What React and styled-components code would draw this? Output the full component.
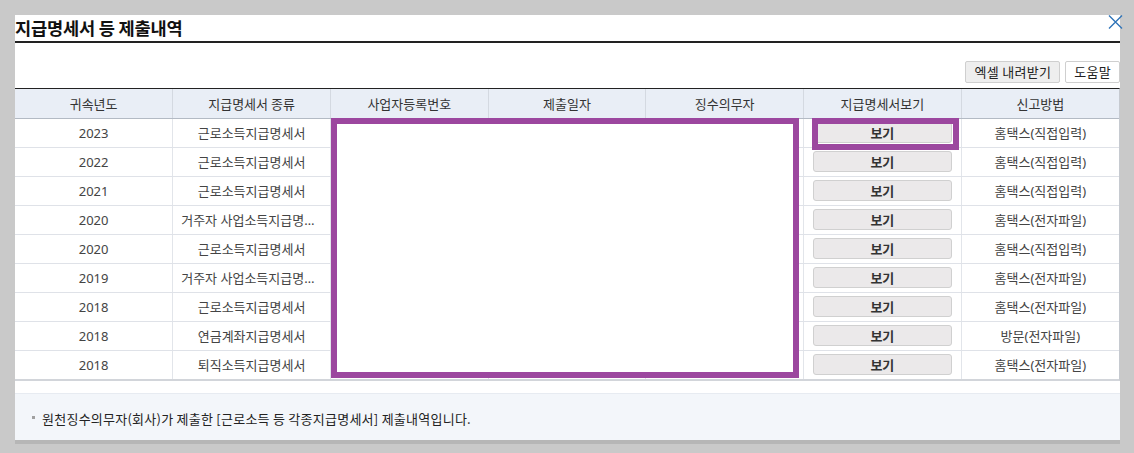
import React from "react";
import styled, { createGlobalStyle } from "styled-components";

const GlobalStyle = createGlobalStyle`
  html, body { margin: 0; padding: 0; background: #c9c9c9; }
  body { font-family: "Noto Sans CJK KR", "Noto Sans", sans-serif; color: #333; }
  * { box-sizing: border-box; }
`;

const Page = styled.div`
  padding: 15px 0 0 15px;
  height: 453px;
`;

const Modal = styled.div`
  position: relative;
  width: 1105px;
  background: #fff;
  box-shadow: 0 4px 0 #b6b6b6;
`;

const Header = styled.div`
  height: 28px;
  display: flex;
  align-items: center;
  border-bottom: 2px solid #222;
`;

const Title = styled.h1`
  margin: 0;
  font-size: 17.6px;
  font-weight: 700;
  color: #111;
  letter-spacing: -0.2px;
  line-height: 1;
`;

const CloseButton = styled.button`
  position: absolute;
  top: -1px;
  right: -3px;
  width: 16px;
  height: 16px;
  padding: 0;
  border: 0;
  background: transparent;
  display: flex;
  align-items: center;
  justify-content: center;
`;

const Toolbar = styled.div`
  display: flex;
  justify-content: flex-end;
  gap: 5px;
  padding: 18px 0 5px;
`;

const ToolButton = styled.button`
  height: 22px;
  padding: 0 8px;
  font-family: inherit;
  font-size: 13px;
  letter-spacing: 0.3px;
  color: #222;
  border: 1px solid #cfcfcf;
  border-radius: 2px;
  background: ${(p) => (p.$primary ? "#eeeeee" : "#ffffff")};
  line-height: 20px;
`;

const TableWrap = styled.div`
  position: relative;
  border-top: 1px solid #222;
  border-bottom: 2px solid #d2d5da;
  border-right: 1px solid #c6cad0;
`;

const Table = styled.table`
  width: 100%;
  border-collapse: collapse;
  table-layout: fixed;
`;

const Th = styled.th`
  height: 29px;
  padding: 0 8px;
  background: #e9eef6;
  font-weight: 400;
  font-size: 13px;
  color: #333;
  border-bottom: 1px solid #b3bac4;
  border-left: 1px solid #d4d9e1;
  &:first-child { border-left: 0; }
`;

const Td = styled.td`
  height: 29px;
  padding: 0 8px;
  font-family: "Noto Sans", "Noto Sans CJK KR", sans-serif;
  font-size: 13px;
  color: #444;
  text-align: center;
  white-space: nowrap;
  overflow: hidden;
  text-overflow: ellipsis;
  border-bottom: 1px solid #dfe2e8;
  border-left: 1px solid #e2e5ea;
  &:first-child { border-left: 0; }
  tr:last-child > & { border-bottom: 0; }
`;

const ViewButton = styled.button`
  display: block;
  margin: 0 auto;
  width: 139px;
  height: 21px;
  padding: 0;
  font-family: "Noto Sans CJK KR", sans-serif;
  font-size: 13px;
  font-weight: 700;
  color: #333;
  background: #ebe9ea;
  border: 1px solid #d0d0d0;
  border-radius: 3px;
`;

const Redaction = styled.div`
  position: absolute;
  left: ${(p) => p.$left}px;
  top: ${(p) => p.$top}px;
  width: ${(p) => p.$width}px;
  height: ${(p) => p.$height}px;
  border: 6px solid #9c479f;
  background: ${(p) => (p.$filled ? "#fff" : "transparent")};
  pointer-events: none;
`;

const Spacer = styled.div`
  height: 12px;
`;

const Footer = styled.div`
  height: 47px;
  display: flex;
  align-items: center;
  padding: 3px 0 0 17px;
  background: #f3f6fa;
  border-top: 1px solid #e7ebf1;
  font-size: 13px;
  letter-spacing: 0.25px;
  color: #222;
`;

const Bullet = styled.span`
  display: inline-block;
  width: 3px;
  height: 3px;
  margin-right: 7px;
  margin-top: -3px;
  background: #a0a0a0;
`;

const columns = [
  "귀속년도",
  "지급명세서 종류",
  "사업자등록번호",
  "제출일자",
  "징수의무자",
  "지급명세서보기",
  "신고방법",
];

const rows = [
  ["2023", "근로소득지급명세서", "홈택스(직접입력)"],
  ["2022", "근로소득지급명세서", "홈택스(직접입력)"],
  ["2021", "근로소득지급명세서", "홈택스(직접입력)"],
  ["2020", "거주자 사업소득지급명세서", "홈택스(전자파일)"],
  ["2020", "근로소득지급명세서", "홈택스(직접입력)"],
  ["2019", "거주자 사업소득지급명세서", "홈택스(전자파일)"],
  ["2018", "근로소득지급명세서", "홈택스(전자파일)"],
  ["2018", "연금계좌지급명세서", "방문(전자파일)"],
  ["2018", "퇴직소득지급명세서", "홈택스(전자파일)"],
];

export default function App() {
  return (
    <>
      <GlobalStyle />
      <Page>
        <Modal>
          <Header>
            <Title>지급명세서 등 제출내역</Title>
          </Header>
          <CloseButton aria-label="닫기">
            <svg width="15" height="14" viewBox="0 0 15 14">
              <path d="M1 0.5 L14 13.5 M14 0.5 L1 13.5" stroke="#2f74b8" strokeWidth="1.4" fill="none" />
            </svg>
          </CloseButton>
          <Toolbar>
            <ToolButton $primary>엑셀 내려받기</ToolButton>
            <ToolButton>도움말</ToolButton>
          </Toolbar>
          <TableWrap>
            <Table>
              <thead>
                <tr>
                  {columns.map((c) => (
                    <Th key={c}>{c}</Th>
                  ))}
                </tr>
              </thead>
              <tbody>
                {rows.map((r, i) => (
                  <tr key={i}>
                    <Td>{r[0]}</Td>
                    <Td>{r[1]}</Td>
                    <Td />
                    <Td />
                    <Td />
                    <Td>
                      <ViewButton>보기</ViewButton>
                    </Td>
                    <Td>{r[2]}</Td>
                  </tr>
                ))}
              </tbody>
            </Table>
            <Redaction $filled $left={316} $top={29} $width={468} $height={260} />
            <Redaction $left={797} $top={29} $width={147} $height={32} />
          </TableWrap>
          <Spacer />
          <Footer>
            <Bullet />
            원천징수의무자(회사)가 제출한 [근로소득 등 각종지급명세서] 제출내역입니다.
          </Footer>
        </Modal>
      </Page>
    </>
  );
}
